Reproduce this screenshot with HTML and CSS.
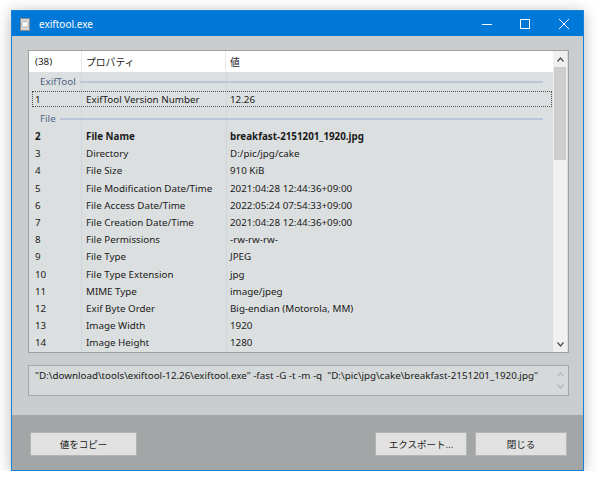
FILE: index.html
```html
<!DOCTYPE html>
<html>
<head>
<meta charset="utf-8">
<link rel="stylesheet" href="styles.css">
</head>
<body>

<div class="window">
  <div class="titlebar">
    <svg class="app_icon" width="10" height="13" viewBox="0 0 10 13">
      <rect x="0.5" y="0.5" width="9" height="12" fill="#d8d8d8" stroke="#8a8a8a"/>
      <path d="M2 5 L4 3 L5 4.5 L6 3 L8 5 L8 9 L2 9 Z" fill="#ffffff" stroke="#9a9a9a" stroke-width="0.6"/>
    </svg>
    <span class="title">exiftool.exe</span>
    <div class="controls">
      <span class="ctl"><svg width="10" height="10"><line x1="0" y1="5.5" x2="10" y2="5.5" stroke="#fff"/></svg></span>
      <span class="ctl"><svg width="10" height="10"><rect x="0.5" y="0.5" width="9" height="9" fill="none" stroke="#fff"/></svg></span>
      <span class="ctl"><svg width="10" height="10"><path d="M0 0 L10 10 M10 0 L0 10" stroke="#fff"/></svg></span>
    </div>
  </div>

  <div class="client">
    <div class="upper">
      <div class="listview">
        <div class="lv_main">
          <div class="lv_header">
            <div class="c1">(38)</div>
            <div class="c2 jp">プロパティ</div>
            <div class="c3 jp">値</div>
          </div>
          <div class="lv_body">
            <div class="group g1"><span>ExifTool</span><i></i></div>
            <div class="row r1 focus"><div class="c1">1</div><div class="c2">ExifTool Version Number</div><div class="c3">12.26</div></div>
            <div class="group g2"><span>File</span><i></i></div>
            <div class="row bold"><div class="c1">2</div><div class="c2">File Name</div><div class="c3">breakfast-2151201_1920.jpg</div></div>
            <div class="row"><div class="c1">3</div><div class="c2">Directory</div><div class="c3">D:/pic/jpg/cake</div></div>
            <div class="row"><div class="c1">4</div><div class="c2">File Size</div><div class="c3">910 KiB</div></div>
            <div class="row"><div class="c1">5</div><div class="c2">File Modification Date/Time</div><div class="c3">2021:04:28 12:44:36+09:00</div></div>
            <div class="row"><div class="c1">6</div><div class="c2">File Access Date/Time</div><div class="c3">2022:05:24 07:54:33+09:00</div></div>
            <div class="row"><div class="c1">7</div><div class="c2">File Creation Date/Time</div><div class="c3">2021:04:28 12:44:36+09:00</div></div>
            <div class="row"><div class="c1">8</div><div class="c2">File Permissions</div><div class="c3">-rw-rw-rw-</div></div>
            <div class="row"><div class="c1">9</div><div class="c2">File Type</div><div class="c3">JPEG</div></div>
            <div class="row"><div class="c1">10</div><div class="c2">File Type Extension</div><div class="c3">jpg</div></div>
            <div class="row"><div class="c1">11</div><div class="c2">MIME Type</div><div class="c3">image/jpeg</div></div>
            <div class="row"><div class="c1">12</div><div class="c2">Exif Byte Order</div><div class="c3">Big-endian (Motorola, MM)</div></div>
            <div class="row"><div class="c1">13</div><div class="c2">Image Width</div><div class="c3">1920</div></div>
            <div class="row"><div class="c1">14</div><div class="c2">Image Height</div><div class="c3">1280</div></div>
          </div>
        </div>
        <div class="vscroll">
          <div class="arrow up"><svg width="7" height="5"><path d="M0.5 4.5 L3.5 1 L6.5 4.5" fill="none" stroke="#505050" stroke-width="1.3"/></svg></div>
          <div class="thumb"></div>
          <div class="track"></div>
          <div class="arrow"><svg width="7" height="5"><path d="M0.5 0.5 L3.5 4 L6.5 0.5" fill="none" stroke="#505050" stroke-width="1.3"/></svg></div>
        </div>
      </div>

      <div class="cmdbox">
        <div class="cmdtext">"D:\download\tools\exiftool-12.26\exiftool.exe" -fast -G -t -m -q &nbsp;"D:\pic\jpg\cake\breakfast-2151201_1920.jpg"</div>
        <div class="mini_scroll">
          <svg width="7" height="5"><path d="M0.5 4.5 L3.5 1 L6.5 4.5" fill="none" stroke="#b4b8b8" stroke-width="1.2"/></svg>
          <svg width="7" height="5"><path d="M0.5 0.5 L3.5 4 L6.5 0.5" fill="none" stroke="#b4b8b8" stroke-width="1.2"/></svg>
        </div>
      </div>
    </div>

    <div class="footer">
      <button class="btn btn_copy jp">値をコピー</button>
      <div class="spacer"></div>
      <button class="btn jp">エクスポート...</button>
      <button class="btn jp">閉じる</button>
    </div>
  </div>
</div>

</body>
</html>
```

FILE: styles.css
```css
body {
  margin: 0;
  background: #ffffff;
  font-family: "Noto Sans", "Noto Sans CJK JP", sans-serif;
  font-size: 9.8px;
  color: #1a1a1a;
}

.jp {
  font-family: "Noto Sans CJK JP", "Noto Sans", sans-serif;
}

.window {
  margin: 10px 0 0 11px;
  width: 571px;
  height: 459px;
  border: 1px solid #1a7fd6;
  box-shadow: 0 2px 14px rgba(0, 0, 0, 0.28);
  display: flex;
  flex-direction: column;
}

/* title bar */
.titlebar {
  height: 25px;
  background: #0078d7;
  display: flex;
  align-items: center;
  color: #ffffff;
}

.app_icon {
  margin: 1px 0 0 8px;
}

.title {
  margin-left: 9px;
  font-family: "Noto Sans", sans-serif;
  font-size: 10px;
}

.controls {
  margin-left: auto;
  display: flex;
}

.ctl {
  width: 38.5px;
  height: 25px;
  display: flex;
  align-items: center;
  justify-content: center;
}

/* client area */
.client {
  flex: 1;
  display: flex;
  flex-direction: column;
}

.upper {
  background: #c9cdcd;
  padding: 14px 14px 19px 16px;
}

.listview {
  height: 301px;
  border: 1px solid #9da1a3;
  background: #dcdfe0;
  display: flex;
}

.lv_main {
  flex: 1;
  display: flex;
  flex-direction: column;
}

.lv_header {
  height: 21px;
  background: #ffffff;
  display: flex;
  align-items: center;
}

.lv_header > div {
  height: 21px;
  line-height: 22px;
}

.lv_header .c2,
.lv_header .c3 {
  border-left: 1px solid #e8e8e8;
}

.c1 {
  width: 46px;
  padding-left: 6px;
}
.c2 {
  width: 139px;
  padding-left: 5px;
}
.c3 {
  flex: 1;
  padding-left: 5px;
  white-space: nowrap;
}

.lv_header .c2 { width: 139px; padding-left: 4px; }
.lv_header .c3 { padding-left: 4px; }

.lv_body {
  flex: 1;
  background-color: #dcdfe0;
  background-image:
    linear-gradient(#d0d5dd, #d0d5dd),
    linear-gradient(#d0d5dd, #d0d5dd);
  background-size: 1px 100%, 1px 100%;
  background-position: 52px 0, 197px 0;
  background-repeat: no-repeat;
}

.group {
  display: flex;
  align-items: center;
  padding: 0 10px 0 11px;
  color: #4f5f86;
}
.group.g1 { height: 19px; }
.group.g2 { height: 20px; padding-top: 1px; box-sizing: border-box; }

.group i {
  flex: 1;
  height: 2px;
  margin-left: 4px;
  background: #bcc4da;
}

.row {
  display: flex;
  height: 17.2px;
  align-items: center;
  position: relative;
}
.row.r1 { height: 17px; }

.row.bold {
  font-weight: bold;
}

.focus::after {
  content: "";
  position: absolute;
  left: 3px;
  right: 1px;
  top: 0;
  bottom: 1px;
  border: 1px dotted #505050;
}

/* list scrollbar */
.vscroll {
  width: 14px;
  margin-right: 1px;
  display: flex;
  flex-direction: column;
  background: #f0f0f0;
}

.arrow {
  height: 16px;
  display: flex;
  align-items: center;
  justify-content: center;
}

.thumb {
  height: 93px;
  background: #cdcdcd;
  margin: 0 1px;
}

.track {
  flex: 1;
}

/* command line box */
.cmdbox {
  margin-top: 12px;
  height: 29px;
  border: 1px solid #a3a7a8;
  background: #d5d9d9;
  display: flex;
}

.cmdtext {
  flex: 1;
  padding: 3px 0 0 6px;
  white-space: nowrap;
  overflow: hidden;
}

.mini_scroll {
  width: 14px;
  margin-right: 1px;
  display: flex;
  flex-direction: column;
  align-items: center;
  justify-content: space-around;
  padding: 3px 0;
}

/* bottom bar */
.footer {
  flex: 1;
  background: #a2a6a6;
  display: flex;
  align-items: flex-start;
  padding: 17px 16px 0 18px;
  gap: 8px;
}

.spacer {
  flex: 1;
}

.btn {
  width: 92px;
  height: 24px;
  background: #e1e1e1;
  border: 1px solid #b4b4b4;
  font-size: 9.5px;
  color: #1a1a1a;
  padding: 0;
}

.btn_copy {
  width: 107px;
}
```
